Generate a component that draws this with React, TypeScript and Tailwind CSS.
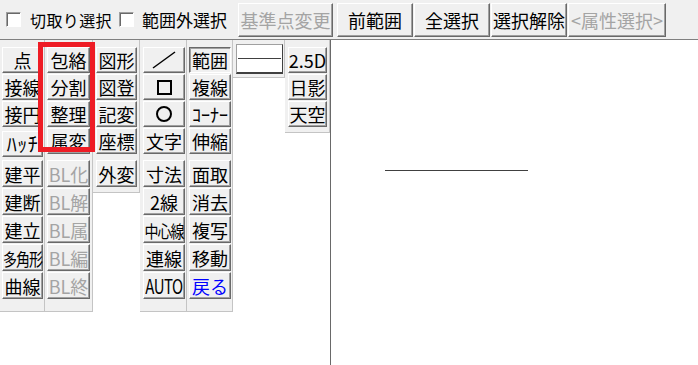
import type { ReactNode } from 'react'

type Item = {
  label: ReactNode
  disabled?: boolean
  pressed?: boolean
  blue?: boolean
  extra?: string
}

const raised =
  'border border-t-white border-l-white border-r-[#696969] border-b-[#696969] shadow-[inset_-1px_-1px_0_#a0a0a0]'
const sunken =
  'border border-t-[#696969] border-l-[#696969] border-r-white border-b-white shadow-[inset_1px_1px_0_#a0a0a0]'

function Btn({ item, tall }: { item: Item; tall?: boolean }) {
  const color = item.disabled ? 'text-[#a4a4a4]' : item.blue ? 'text-[#0000ff]' : 'text-black'
  return (
    <div
      className={`flex items-center justify-center w-full mb-[1px] bg-[#f0f0f0] text-[18px] leading-none whitespace-nowrap ${
        tall ? 'h-[27px]' : 'h-[26px]'
      } ${item.pressed ? sunken : raised} ${color} ${item.extra ?? ''}`}
    >
      {item.label}
    </div>
  )
}

function Panel({
  width,
  height,
  pad,
  top,
  bottom = [],
  gap = 'mt-[5px]',
}: {
  width: string
  height: string
  pad: string
  top: Item[]
  bottom?: Item[]
  gap?: string
}) {
  return (
    <div className={`${width} ${height} ${pad} pt-[7px] shrink-0 bg-[#f0f0f0] border-r border-b border-[#c4c4c4] flex flex-col`}>
      {top.map((it, i) => (
        <Btn key={i} item={it} />
      ))}
      {bottom.length > 0 && (
        <div className={`${gap} flex flex-col`}>
          {bottom.map((it, i) => (
            <Btn key={i} item={it} tall />
          ))}
        </div>
      )}
    </div>
  )
}

// narrow three-character labels, squeezed like the bitmap font does
function Narrow({ text, w, cls }: { text: string; w: string; cls: string }) {
  return (
    <span className={`inline-flex justify-center ${w}`}>
      <span className={`inline-block ${cls}`}>{text}</span>
    </span>
  )
}

function Check({ className = '' }: { className?: string }) {
  return (
    <div
      className={`w-[15px] h-[15px] shrink-0 bg-white border border-t-[#a0a0a0] border-l-[#a0a0a0] border-r-white border-b-white shadow-[inset_1px_1px_0_#696969] ${className}`}
    />
  )
}

function ToolBtn({ label, w, ml, disabled }: { label: string; w: string; ml: string; disabled?: boolean }) {
  return (
    <div
      className={`${w} ${ml} h-[34px] shrink-0 flex items-center justify-center text-[18px] leading-none bg-[#f0f0f0] ${raised} ${
        disabled ? 'text-[#a4a4a4]' : 'text-black'
      }`}
    >
      {label}
    </div>
  )
}

export default function App() {
  return (
    <div className="w-[698px] h-[365px] overflow-hidden bg-white font-['Noto_Sans_CJK_JP','Noto_Sans',sans-serif] select-none">
      <div className="h-[40px] bg-[#f0f0f0] border-b border-[#808080] flex items-center">
        <Check className="ml-[6px]" />
        <span className="ml-[9px] w-[82px] shrink-0 text-[16px] tracking-[0.4px] leading-none whitespace-nowrap">切取り選択</span>
        <Check className="ml-[7px]" />
        <span className="ml-[8px] w-[86px] shrink-0 text-[17px] leading-none whitespace-nowrap">範囲外選択</span>
        <ToolBtn label="基準点変更" w="w-[95px]" ml="ml-[10px]" disabled />
        <ToolBtn label="前範囲" w="w-[76px]" ml="ml-[4px]" />
        <ToolBtn label="全選択" w="w-[76px]" ml="ml-[1px]" />
        <ToolBtn label="選択解除" w="w-[76px]" ml="ml-[1px]" />
        <ToolBtn label="<属性選択>" w="w-[98px]" ml="ml-[1px]" disabled />
      </div>

      <div className="flex items-start h-[325px]">
        <Panel
          width="w-[45px]"
          height="h-[272px]"
          pad="pl-[2px] pr-[1px]"
          top={[
            { label: '点' },
            { label: '接線' },
            { label: '接円' },
            { label: <span className="text-[20px] tracking-[0.5px]">ﾊｯﾁ</span>, extra: 'mt-[3px]' },
          ]}
          gap="mt-[2px]"
          bottom={[
            { label: '建平' },
            { label: '建断' },
            { label: '建立' },
            { label: <Narrow text="多角形" w="w-[38px]" cls="text-[14px] tracking-[-1px] scale-y-[1.25]" /> },
            { label: '曲線' },
          ]}
        />
        <Panel
          width="w-[48px]"
          height="h-[272px]"
          pad="pl-[2px] pr-[2px]"
          top={[{ label: '包絡' }, { label: '分割' }, { label: '整理' }, { label: '属変' }]}
          bottom={[
            { label: 'BL化', disabled: true },
            { label: 'BL解', disabled: true },
            { label: 'BL属', disabled: true },
            { label: 'BL編', disabled: true },
            { label: 'BL終', disabled: true },
          ]}
        />
        <Panel
          width="w-[47px]"
          height="h-[153px]"
          pad="pl-[3px] pr-[2px]"
          top={[{ label: '図形' }, { label: '図登' }, { label: '記変' }, { label: '座標' }]}
          bottom={[{ label: '外変' }]}
        />
        <Panel
          width="w-[47px]"
          height="h-[272px]"
          pad="pl-[3px] pr-[1px]"
          top={[
            {
              label: (
                <svg width="26" height="20" viewBox="0 0 26 20">
                  <line x1="2" y1="18" x2="24" y2="2" stroke="black" strokeWidth="1.5" />
                </svg>
              ),
            },
            {
              label: <span className="inline-block w-[15px] h-[15px] border-[2px] border-black" />,
            },
            {
              label: <span className="inline-block w-[16px] h-[16px] rounded-full border-[2px] border-black" />,
            },
            { label: '文字' },
          ]}
          bottom={[
            { label: '寸法' },
            { label: '2線' },
            { label: <Narrow text="中心線" w="w-[40px]" cls="text-[14px] tracking-[-1px] scale-y-[1.25]" /> },
            { label: '連線' },
            { label: <Narrow text="AUTO" w="w-[38px]" cls="text-[15px] tracking-[-0.5px] scale-y-[1.3]" /> },
          ]}
        />
        <Panel
          width="w-[46px]"
          height="h-[272px]"
          pad="pl-[2px] pr-[1px]"
          top={[
            { label: '範囲', pressed: true },
            { label: '複線' },
            { label: 'ｺｰﾅｰ' },
            { label: '伸縮' },
          ]}
          bottom={[
            { label: '面取' },
            { label: '消去' },
            { label: '複写' },
            { label: '移動' },
            { label: '戻る', blue: true },
          ]}
        />
        <div className="w-[52px] h-[38px] shrink-0 bg-[#f0f0f0] border-r border-b border-[#c4c4c4] pl-[3px] pr-[1px] pt-[4px]">
          <div className="h-[30px] bg-white border border-t-[#a0a0a0] border-l-[#a0a0a0] border-r-[#404040] border-b-[#404040] border-b-2 flex items-center px-[1px]">
            <div className="w-full h-[1px] bg-[#404040]" />
          </div>
        </div>
        <Panel
          width="w-[45px]"
          height="h-[93px]"
          pad="pl-[3px] pr-[2px]"
          top={[{ label: '2.5D' }, { label: '日影' }, { label: '天空' }]}
        />
        <div className="flex-1 h-full border-l border-[#696969] bg-white relative">
          <svg className="absolute inset-0" width="100%" height="100%">
            <line x1="54" y1="130.5" x2="197" y2="130.5" stroke="#404040" strokeWidth="1" />
          </svg>
        </div>
      </div>

      <div className="pointer-events-none fixed left-[38px] top-[42px] w-[57px] h-[110px] border-[5px] border-[#ee1c25]" />
    </div>
  )
}
